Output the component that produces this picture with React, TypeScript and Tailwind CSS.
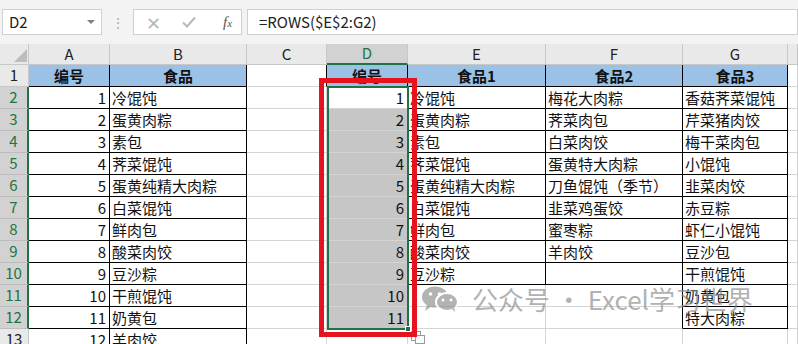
import React from "react";

const COLS = ["A", "B", "C", "D", "E", "F", "G", "H"];

const colA = ["编号", "1", "2", "3", "4", "5", "6", "7", "8", "9", "10", "11", "12"];
const colB = ["食品", "冷馄饨", "蛋黄肉粽", "素包", "荠菜馄饨", "蛋黄纯精大肉粽", "白菜馄饨", "鲜肉包", "酸菜肉饺", "豆沙粽", "干煎馄饨", "奶黄包", "羊肉饺"];
const colD = ["编号", "1", "2", "3", "4", "5", "6", "7", "8", "9", "10", "11", ""];
const colE = ["食品1", "冷馄饨", "蛋黄肉粽", "素包", "荠菜馄饨", "蛋黄纯精大肉粽", "白菜馄饨", "鲜肉包", "酸菜肉饺", "豆沙粽", "", "", ""];
const colF = ["食品2", "梅花大肉粽", "荠菜肉包", "白菜肉饺", "蛋黄特大肉粽", "刀鱼馄饨（季节）", "韭菜鸡蛋饺", "蜜枣粽", "羊肉饺", "", "", "", ""];
const colG = ["食品3", "香菇荠菜馄饨", "芹菜猪肉饺", "梅干菜肉包", "小馄饨", "韭菜肉饺", "赤豆粽", "虾仁小馄饨", "豆沙包", "干煎馄饨", "奶黄包", "特大肉粽", ""];

const data: Record<string, string[]> = { A: colA, B: colB, D: colD, E: colE, F: colF, G: colG };

// which cells carry a black border
function bordered(r: number, c: string) {
  if (c === "A" || c === "B") return r >= 1;
  if (c === "D") return r === 1;
  if (c === "E" || c === "F") return r >= 1 && r <= 10;
  if (c === "G") return r >= 1 && r <= 12;
  return false;
}

const isHeader = (r: number, c: string) => r === 1 && c !== "C" && c !== "H";
const isNumber = (c: string, r: number) => (c === "A" || c === "D") && r > 1;

function Cell({ r, c }: { r: number; c: string }) {
  const idx = COLS.indexOf(c);
  const next = COLS[idx + 1];
  const rightBlack = bordered(r, c) || (next ? bordered(r, next) : false);
  const bottomBlack = bordered(r, c) || bordered(r + 1, c);
  const text = data[c]?.[r - 1] ?? "";
  const selected = c === "D" && r >= 3 && r <= 12;

  return (
    <div
      className={[
        "h-[22px] border-r border-b overflow-visible whitespace-nowrap flex items-center text-[15px] leading-[22px] text-[#111]",
        rightBlack ? "border-r-black" : "border-r-[#d4d4d4]",
        bottomBlack ? "border-b-black" : "border-b-[#d4d4d4]",
        isHeader(r, c) ? "bg-[#9bc2e6] justify-center font-bold" : selected ? "bg-[#c6c6c6]" : "bg-white",
        isNumber(c, r) ? "justify-end pr-[3px]" : !isHeader(r, c) ? "pl-[2px]" : "",
      ].join(" ")}
    >
      {text}
    </div>
  );
}

function Toolbar() {
  return (
    <div className="h-[44px] bg-[#f3f3f3] flex items-start pt-[9px] pl-[2px] gap-0">
      <div className="w-[100px] h-[26px] bg-white border border-[#d0d0d0] flex items-center justify-between pl-[6px] pr-[6px] text-[15px] text-[#222]">
        <span>D2</span>
        <span className="w-0 h-0 border-l-[4px] border-r-[4px] border-t-[4px] border-l-transparent border-r-transparent border-t-[#808080]" />
      </div>
      <div className="w-[31px] h-[26px] flex items-center justify-center text-[#b0b0b0] text-[14px]">⋮</div>
      <div className="w-[109px] h-[26px] bg-white border border-[#d0d0d0] flex items-center text-[#b8b8b8]">
        <span className="ml-[12px] text-[18px] leading-none">✕</span>
        <svg className="ml-[21px]" width="14" height="12" viewBox="0 0 14 12">
          <path d="M1 6.5 L5 10.5 L13 1.5" fill="none" stroke="#b8b8b8" strokeWidth="2" />
        </svg>
        <span className="ml-[27px] italic text-[15px] text-[#555] font-['Liberation_Serif',serif]">
          f<span className="text-[11px]">x</span>
        </span>
      </div>
      <div className="flex-1 ml-[5px] h-[26px] bg-white border border-[#d0d0d0] flex items-center pl-[11px] text-[15px] text-[#222]">
        =ROWS($E$2:G2)
      </div>
    </div>
  );
}

function WeChatIcon() {
  return (
    <svg width="38" height="26" viewBox="0 0 38 26">
      <ellipse cx="14" cy="11" rx="13" ry="10.5" fill="#8c8c8c" />
      <path d="M6 19 L4 25 L11 20 Z" fill="#8c8c8c" />
      <ellipse cx="26" cy="16" rx="11" ry="9" fill="#8c8c8c" stroke="#fff" strokeWidth="2" />
      <path d="M31 23 L34 26 L33 21 Z" fill="#8c8c8c" />
      <circle cx="9.5" cy="8" r="1.8" fill="#fff" />
      <circle cx="18.5" cy="8" r="1.8" fill="#fff" />
      <circle cx="22" cy="14" r="1.5" fill="#fff" />
      <circle cx="30" cy="14" r="1.5" fill="#fff" />
    </svg>
  );
}

export default function App() {
  const rows = Array.from({ length: 13 }, (_, i) => i + 1);
  return (
    <div className="relative w-[798px] h-[344px] overflow-hidden bg-white font-['Noto_Sans_CJK_SC','Noto_Sans',sans-serif]">
      <Toolbar />
      <div className="grid grid-cols-[29px_81px_137px_80px_81px_138px_137px_105px_1fr]">
        {/* column headers */}
        <div className="h-[21px] bg-[#e9e9e9] border-r border-b border-[#c8c8c8] relative">
          <svg className="absolute right-[1px] bottom-[2px]" width="13" height="13" viewBox="0 0 13 13">
            <path d="M13 0 L13 13 L0 13 Z" fill="#bdbdbd" />
          </svg>
        </div>
        {COLS.map((c) => (
          <div
            key={c}
            className={[
              "h-[21px] flex items-center justify-center text-[15px] border-r border-r-[#c8c8c8]",
              c === "D"
                ? "bg-[#d2d2d2] text-[#217346] border-b-2 border-b-[#217346]"
                : "bg-[#e9e9e9] text-[#222] border-b border-b-[#c8c8c8]",
            ].join(" ")}
          >
            {c === "H" ? "" : c}
          </div>
        ))}

        {rows.map((r) => {
          const sel = r >= 2 && r <= 12;
          return (
            <React.Fragment key={r}>
              <div
                className={[
                  "h-[22px] flex items-center justify-center text-[15px] border-b",
                  sel
                    ? "bg-[#d2d2d2] text-[#217346] border-b-[#bcbcbc] border-r-2 border-r-[#217346]"
                    : "bg-[#e9e9e9] text-[#222] border-b-[#c8c8c8] border-r border-r-[#c8c8c8]",
                ].join(" ")}
              >
                {r}
              </div>
              {COLS.map((c) => (
                <Cell key={c} r={r} c={c} />
              ))}
            </React.Fragment>
          );
        })}
      </div>

      {/* selection outline D2:D12 */}
      <div className="absolute left-[327px] top-[86px] w-[82px] h-[244px] border-2 border-[#217346] pointer-events-none" />
      <div className="absolute left-[405px] top-[326px] w-[6px] h-[6px] bg-[#217346] border border-white" />
      {/* quick analysis */}
      <svg className="absolute left-[411px] top-[331px]" width="14" height="13" viewBox="0 0 14 13">
        <rect x="0.5" y="0.5" width="9" height="9" fill="#fff" stroke="#9a9a9a" />
        <rect x="4.5" y="4.5" width="9" height="8" fill="#fff" stroke="#9a9a9a" />
      </svg>

      {/* red highlight box */}
      <div className="absolute left-[319px] top-[78px] w-[98px] h-[259px] border-[5px] border-[#e5131d] pointer-events-none" />

      {/* watermark */}
      <div className="absolute left-[421px] top-[284px] flex items-center opacity-65 pointer-events-none">
        <WeChatIcon />
        <span className="ml-[13px] text-[26px] leading-[30px] text-[#8a8a8a] whitespace-nowrap">
          公众号 · Excel学习世界
        </span>
      </div>
    </div>
  );
}
